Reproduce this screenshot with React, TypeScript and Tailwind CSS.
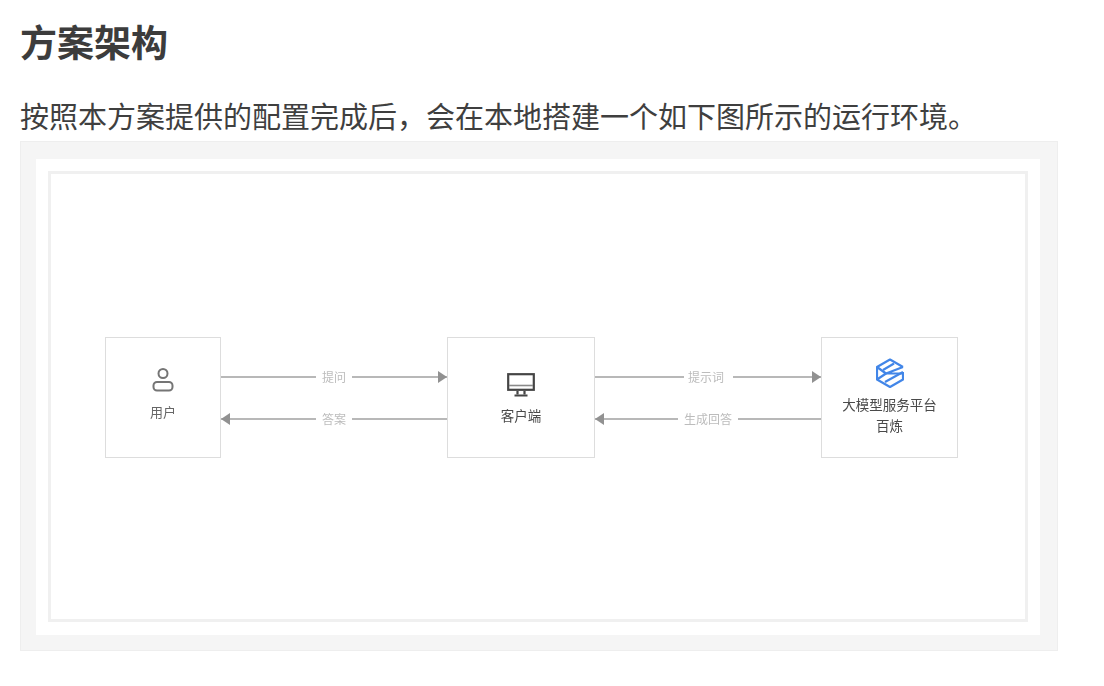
const cjk = "font-['Noto_Sans_CJK_SC','Liberation_Sans',sans-serif]";

function UserIcon() {
  return (
    <svg width="24" height="26" viewBox="0 0 24 26" fill="none" stroke="#757575" strokeWidth="2">
      <circle cx="12" cy="6.5" r="4.5" />
      <rect x="2.5" y="15" width="19" height="8.5" rx="3.5" />
    </svg>
  );
}

function MonitorIcon() {
  return (
    <svg width="28" height="24" viewBox="0 0 28 24" fill="none">
      <rect x="1.2" y="1.2" width="25.6" height="15.6" stroke="#454545" strokeWidth="2.2" />
      <path d="M2 12.5h24" stroke="#8a8a8a" strokeWidth="1.6" />
      <path d="M10.5 18v3.5M17.5 18v3.5" stroke="#454545" strokeWidth="2.2" />
      <path d="M7.5 22.5h13" stroke="#454545" strokeWidth="2" />
    </svg>
  );
}

function BailianLogo() {
  return (
    <svg width="28" height="30" viewBox="0 0 28 30" fill="none" stroke="#4286e8" strokeWidth="2.2" strokeLinejoin="round">
      <path d="M27 9 14 1.5 1 9v12.5L14 29l13-7.500V14" />
      <path d="M1 9l9 6.500-9 6" />
      <path d="M7 12 18 5.500M10 15.500 27 9M10 15.500h17" />
      <path d="M9 24 27 14" />
    </svg>
  );
}

function Line({ label, gap, reverse = false }: { label: string; gap: string; reverse?: boolean }) {
  return (
    <div className={`flex items-center h-3 ${reverse ? "flex-row-reverse" : ""}`}>
      <div className="h-0.5 flex-1 bg-[#b8b8b8]" />
      <span className={`text-[12px] leading-3 text-[#bcbcbc] text-center ${gap}`}>{label}</span>
      <div className="h-0.5 flex-1 bg-[#b8b8b8]" />
    </div>
  );
}

function Connector({ top, bottom, topGap, bottomGap, width }: { top: string; bottom: string; topGap: string; bottomGap: string; width: string }) {
  return (
    <div className={`flex flex-col gap-[30px] ${width}`}>
      <div className="relative">
        <Line label={top} gap={topGap} />
        <svg width="9" height="12" viewBox="0 0 9 12" fill="#919191" className="absolute right-0 top-0">
          <path d="M0 0 9 6 0 12z" />
        </svg>
      </div>
      <div className="relative">
        <Line label={bottom} reverse gap={bottomGap} />
        <svg width="9" height="12" viewBox="0 0 9 12" fill="#919191" className="absolute left-0 top-0">
          <path d="M9 0 0 6 9 12z" />
        </svg>
      </div>
    </div>
  );
}

export default function App() {
  return (
    <div className={`h-[686px] w-[1104px] overflow-hidden bg-white pl-5 pt-[18px] ${cjk}`}>
      <h2 className="text-[37px] leading-[46px] font-bold text-[#3c3c3c]">方案架构</h2>
      <p className="mt-[32px] text-[29px] leading-[38px] whitespace-nowrap text-[#3f3f3f]">
        按照本方案提供的配置完成后，会在本地搭建一个如下图所示的运行环境。
      </p>

      <div className="mt-[7px] h-[510px] w-[1038px] border border-[#eeeeee] bg-[#f5f5f5] pl-[15px] pr-[17px] pt-[17px] pb-[15px]">
        <div className="h-full bg-white px-3 pt-3 pb-[13px]">
          <div className="flex h-full items-center border-[3px] border-[#f0f0f0] pl-[54px] pt-[2px] blur-[0.4px]">
            <div className="flex h-[121px] w-[116px] shrink-0 flex-col items-center border border-[#dddddd] pt-[29px]">
              <UserIcon />
              <span className="mt-[11px] text-[13px] leading-4 text-[#666666]">用户</span>
            </div>
            <Connector top="提问" bottom="答案" topGap="w-[36px]" bottomGap="w-[36px]" width="w-[226px]" />
            <div className="flex h-[121px] w-[148px] shrink-0 flex-col items-center border border-[#dddddd] pt-[35px]">
              <MonitorIcon />
              <span className="mt-[10px] text-[13.5px] leading-4 text-[#4a4a4a]">客户端</span>
            </div>
            <Connector top="提示词" bottom="生成回答" topGap="mr-1 w-[45px]" bottomGap="w-[60px]" width="w-[226px]" />
            <div className="flex h-[121px] w-[137px] shrink-0 flex-col items-center border border-[#dddddd] pt-[20px]">
              <BailianLogo />
              <span className="mt-[6px] text-[13.5px] leading-[21px] text-[#4a4a4a]">大模型服务平台</span>
              <span className="text-[13.5px] leading-[21px] text-[#4a4a4a]">百炼</span>
            </div>
          </div>
        </div>
      </div>
    </div>
  );
}
